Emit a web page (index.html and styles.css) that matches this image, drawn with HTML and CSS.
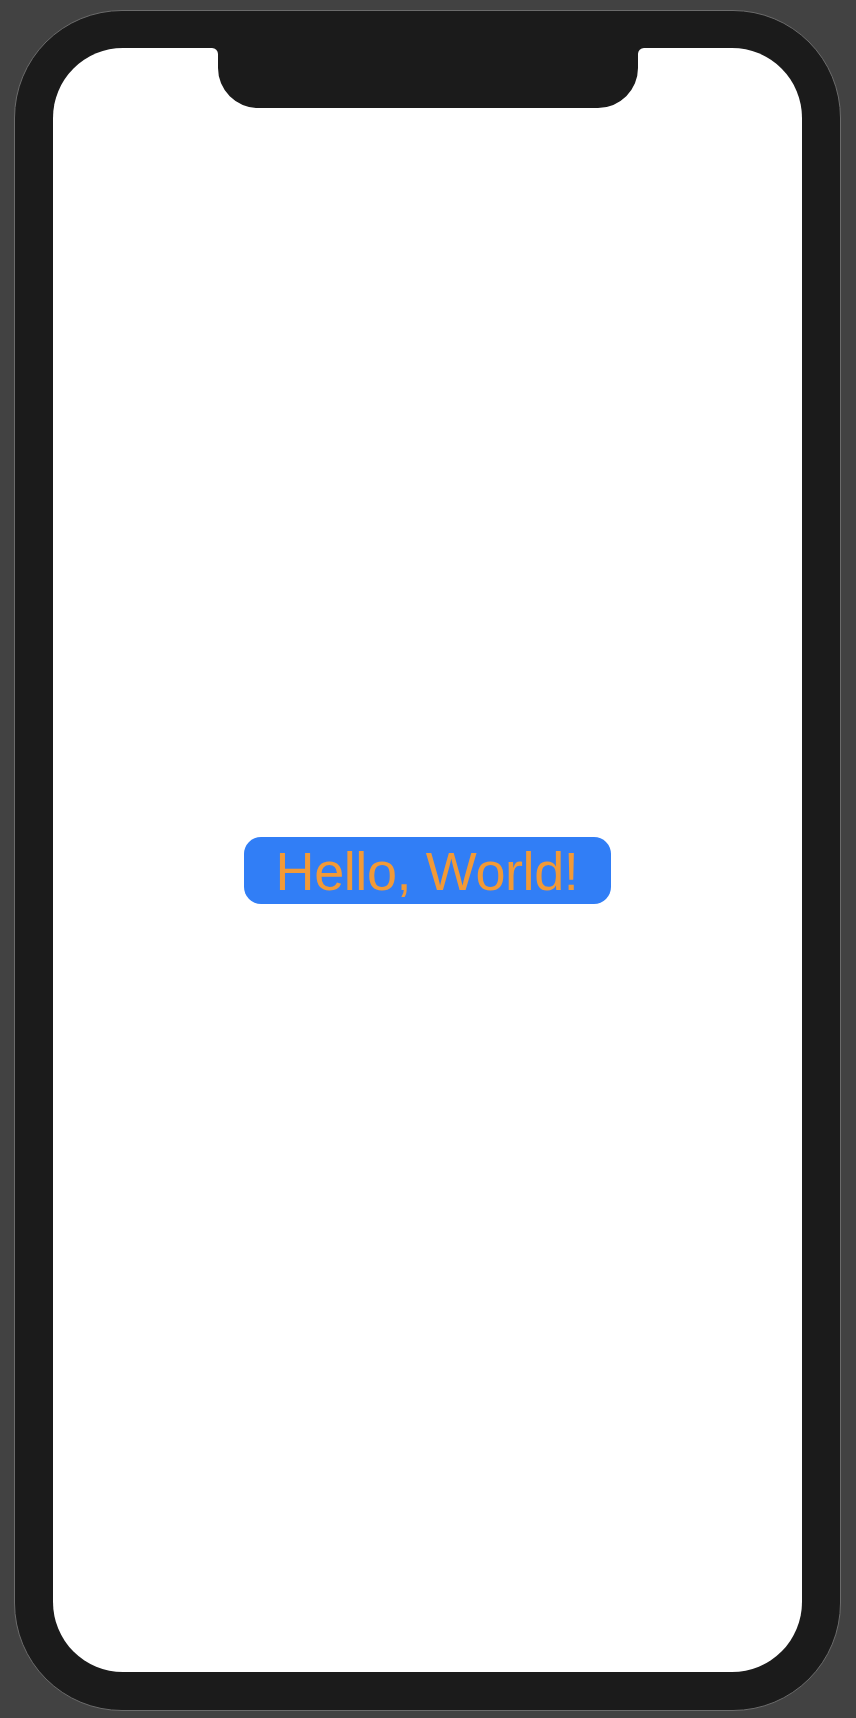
FILE: index.html
```html
<!DOCTYPE html>
<html lang="en">
<head>
<meta charset="utf-8">
<title>Preview</title>
<link rel="stylesheet" href="styles.css">
</head>
<body>
<div class="device">
  <div class="screen">
    <svg class="notch" width="432" height="60" viewBox="0 0 432 60" aria-hidden="true">
      <path d="M0,0 H432 A6,6 0 0 0 426,6 V20 A40,40 0 0 1 386,60 H46 A40,40 0 0 1 6,20 V6 A6,6 0 0 0 0,0 Z" fill="#1b1b1b"/>
    </svg>
    <div class="content">
      <div class="hello">Hello, World!</div>
    </div>
  </div>
</div>
</body>
</html>
```
FILE: styles.css
```css
html, body {
  margin: 0;
  padding: 0;
  background: #424242;
}
body {
  width: 856px;
  height: 1718px;
  overflow: hidden;
}
.device {
  box-sizing: border-box;
  margin: 10px 0 0 14px;
  width: 827px;
  height: 1701px;
  padding: 37px 38px 38px 38px;
  border: 1px solid #6b6b6b;
  border-radius: 108px;
  background: #1b1b1b;
}
.screen {
  position: relative;
  width: 749px;
  height: 1624px;
  background: #ffffff;
  border-radius: 70px;
  overflow: hidden;
}
.notch {
  position: absolute;
  left: 159px;
  top: 0;
  display: block;
}
.content {
  box-sizing: border-box;
  height: 100%;
  padding-top: 21px;
  display: flex;
  align-items: center;
  justify-content: center;
}
.hello {
  font-family: "Liberation Sans", Arial, sans-serif;
  font-size: 54px;
  letter-spacing: -0.4px;
  line-height: 65px;
  padding: 2px 33px 0 32px;
  color: #f29a37;
  background: #317ef6;
  border-radius: 17px;
}
```
